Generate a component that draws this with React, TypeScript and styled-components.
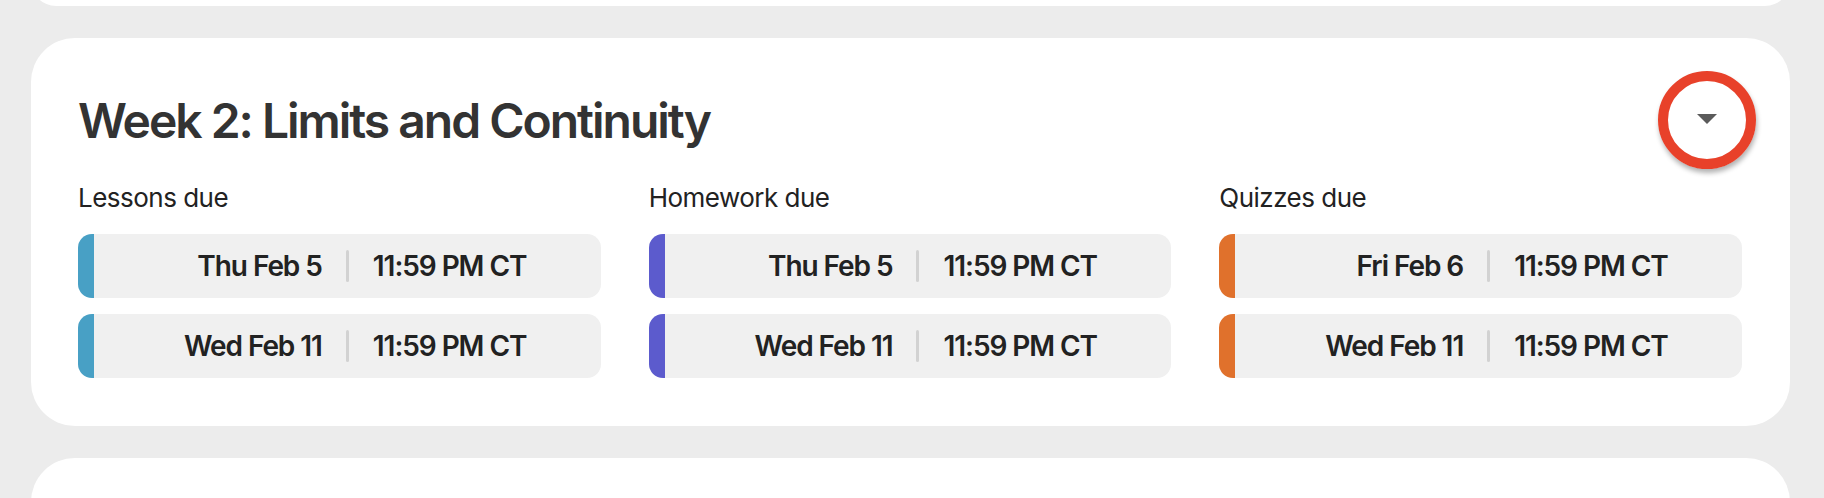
import React from "react";
import styled, { createGlobalStyle } from "styled-components";

const GlobalStyle = createGlobalStyle`
  html, body {
    margin: 0;
    padding: 0;
    background: #ececec;
    overflow: hidden;
  }
  body {
    font-family: Inter, "Noto Sans", "Liberation Sans", sans-serif;
    -webkit-font-smoothing: antialiased;
  }
`;

const Page = styled.div`
  display: flex;
  flex-direction: column;
  gap: 32px;
  padding: 0 34px 0 31px;
  margin-top: -44px;
`;

const Card = styled.section<{ $stub?: boolean }>`
  background: #ffffff;
  border-radius: 44px;
  min-height: ${(p) => (p.$stub ? "50px" : "0")};
  padding: ${(p) => (p.$stub ? "0" : "34px 48px 48px 47px")};
  box-sizing: border-box;
`;

const Header = styled.div`
  display: flex;
  align-items: center;
  justify-content: space-between;
  height: 96px;
`;

const Title = styled.h2`
  margin: 0;
  font-size: 48px;
  font-weight: 600;
  letter-spacing: -0.042em;
  color: #333333;
`;

const Toggle = styled.button`
  position: relative;
  width: 48px;
  height: 48px;
  margin-right: 11px;
  border: none;
  background: transparent;
  padding: 0;
  display: flex;
  align-items: center;
  justify-content: center;
  cursor: pointer;
`;

const Caret = styled.span`
  width: 0;
  height: 0;
  border-left: 10px solid transparent;
  border-right: 10px solid transparent;
  border-top: 10px solid #5b5b5b;
  margin-top: -2px;
`;

/* highlight ring drawn over the toggle */
const Ring = styled.span`
  position: absolute;
  left: 50%;
  top: 50%;
  width: 78px;
  height: 78px;
  transform: translate(-50%, -50%);
  border: 10px solid #e8412a;
  border-radius: 50%;
  box-shadow: 1px 4px 5px rgba(0, 0, 0, 0.3);
  pointer-events: none;
`;

const Columns = styled.div`
  display: grid;
  grid-template-columns: repeat(3, 1fr);
  column-gap: 48px;
  margin-top: 14px;
`;

const Column = styled.div`
  display: flex;
  flex-direction: column;
`;

const Label = styled.div`
  font-size: 26px;
  font-weight: 400;
  letter-spacing: -0.02em;
  color: #222222;
  margin-bottom: 21px;
`;

const Rows = styled.div`
  display: flex;
  flex-direction: column;
  gap: 16px;
`;

const Due = styled.div<{ $accent: string }>`
  display: grid;
  grid-template-columns: 1fr auto 1fr;
  align-items: center;
  column-gap: 24px;
  height: 64px;
  background: #f0f0f0;
  border-left: 16px solid ${(p) => p.$accent};
  border-radius: 14px;
  font-size: 28px;
  font-weight: 600;
  letter-spacing: -0.038em;
  color: #222222;
`;

const DateText = styled.span`
  text-align: right;
`;

const TimeText = styled.span`
  text-align: left;
`;

const Divider = styled.span`
  width: 3px;
  height: 32px;
  border-radius: 2px;
  background: #d2d2d2;
`;

const groups = [
  { label: "Lessons due", accent: "#48a0c5", dates: ["Thu Feb 5", "Wed Feb 11"] },
  { label: "Homework due", accent: "#5c5bcd", dates: ["Thu Feb 5", "Wed Feb 11"] },
  { label: "Quizzes due", accent: "#e0712c", dates: ["Fri Feb 6", "Wed Feb 11"] },
];

export default function App() {
  return (
    <>
      <GlobalStyle />
      <Page>
        <Card $stub />
        <Card>
          <Header>
            <Title>Week 2: Limits and Continuity</Title>
            <Toggle aria-label="Expand week">
              <Caret />
              <Ring />
            </Toggle>
          </Header>
          <Columns>
            {groups.map((g) => (
              <Column key={g.label}>
                <Label>{g.label}</Label>
                <Rows>
                  {g.dates.map((d) => (
                    <Due key={d} $accent={g.accent}>
                      <DateText>{d}</DateText>
                      <Divider />
                      <TimeText>11:59 PM CT</TimeText>
                    </Due>
                  ))}
                </Rows>
              </Column>
            ))}
          </Columns>
        </Card>
        <Card $stub style={{ minHeight: 200 }} />
      </Page>
    </>
  );
}
